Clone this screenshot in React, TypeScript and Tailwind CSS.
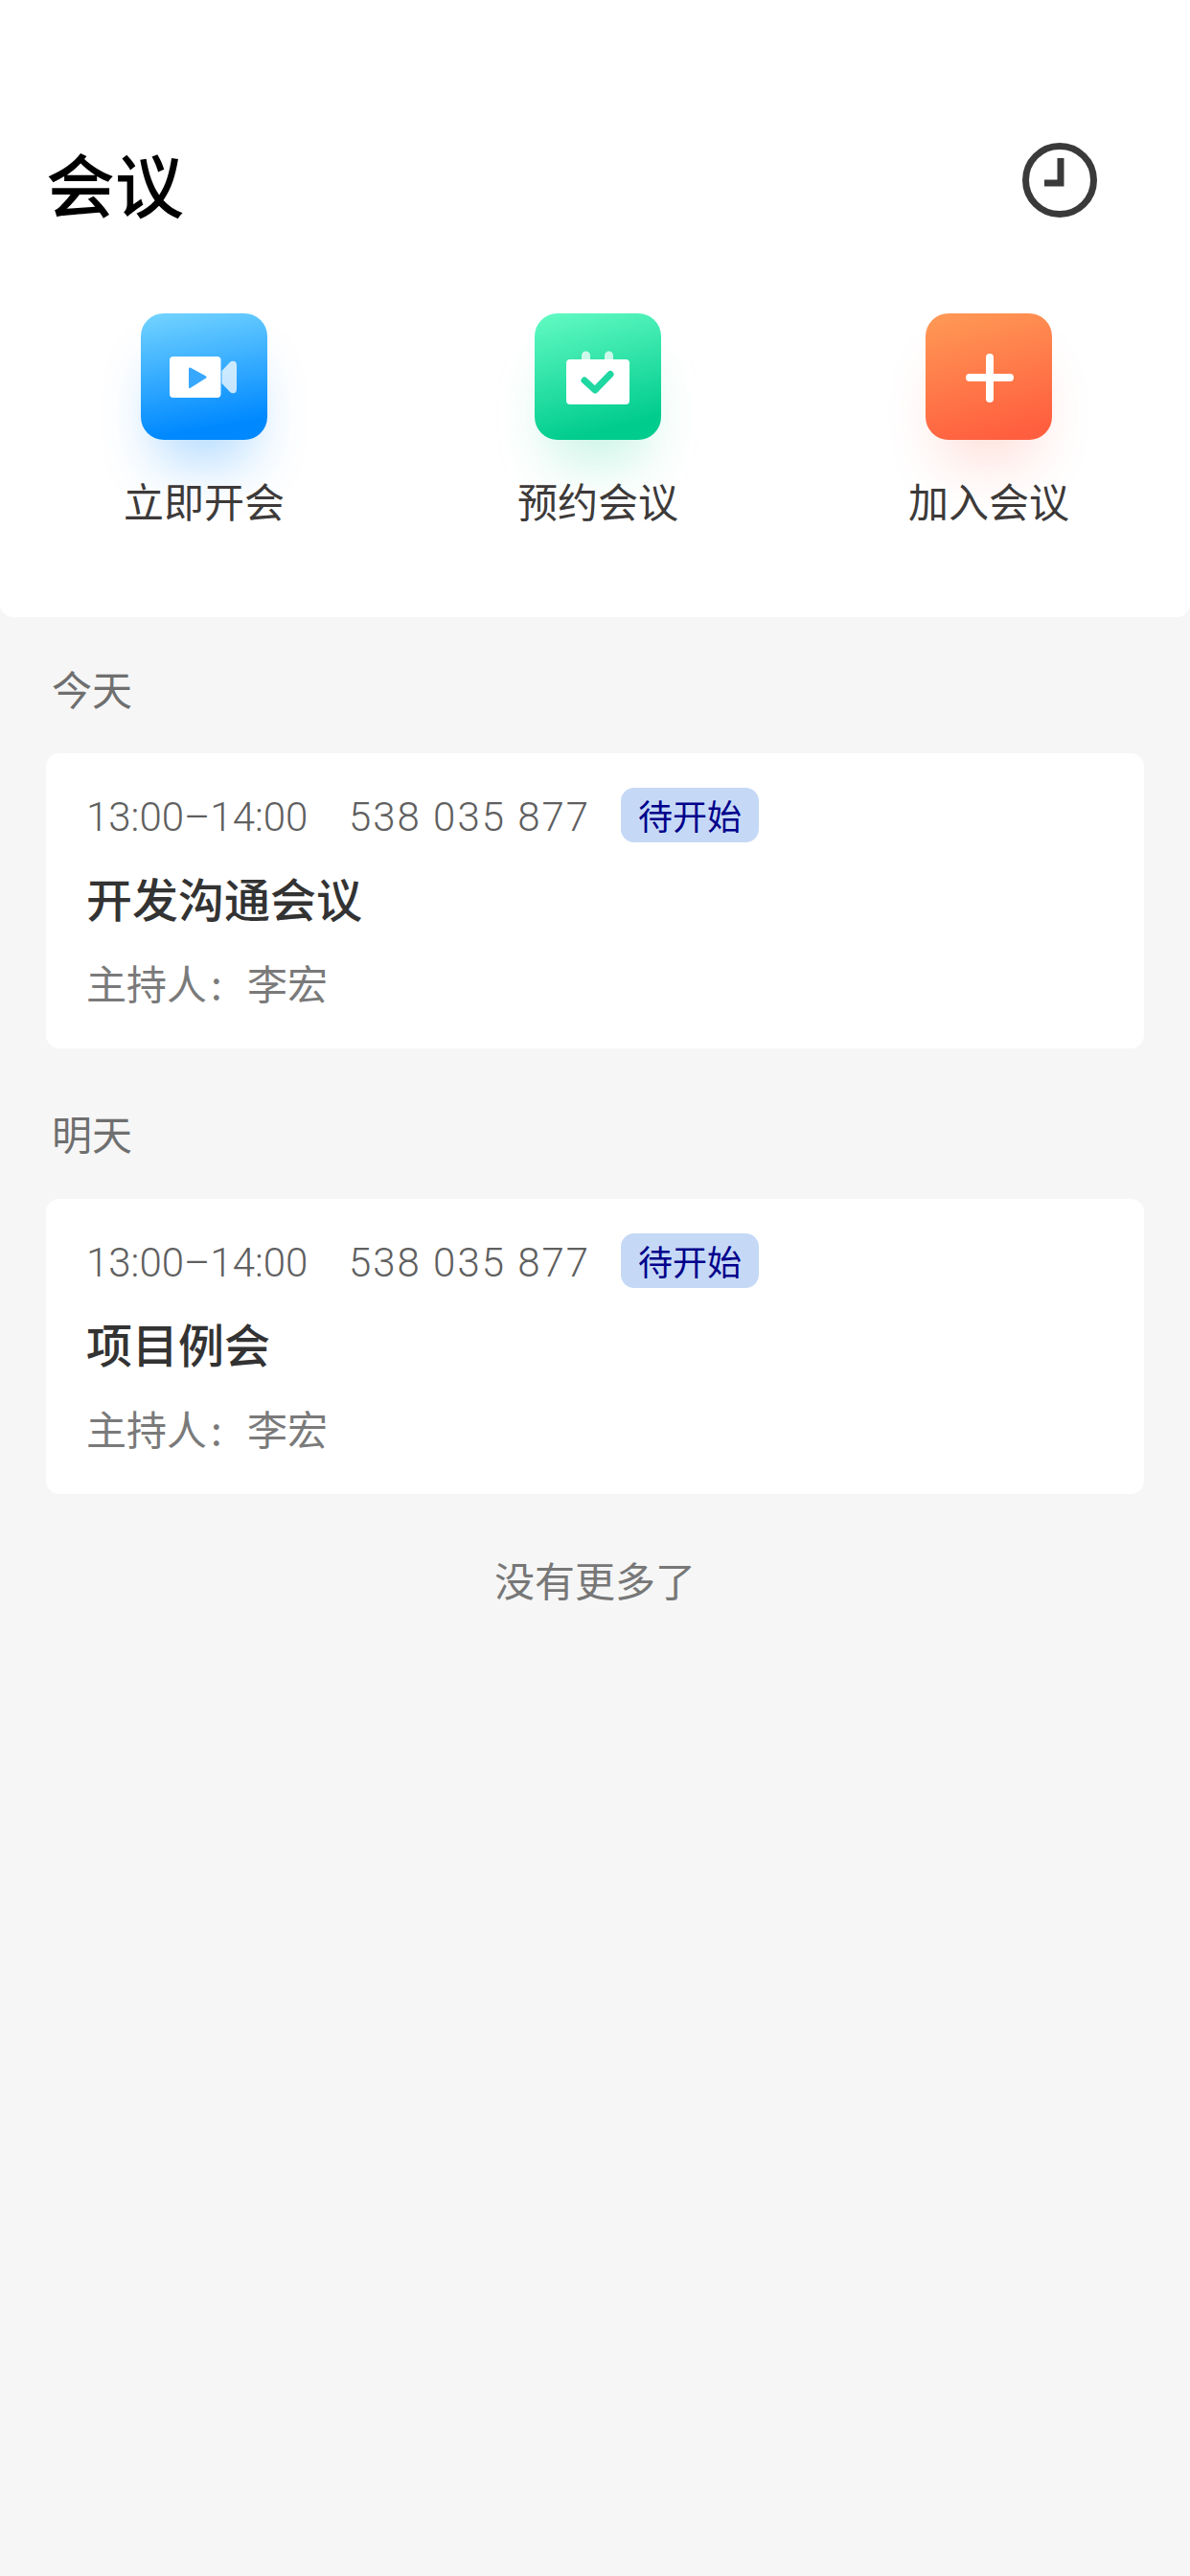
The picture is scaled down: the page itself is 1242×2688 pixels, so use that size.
const cjk = '"Noto Sans CJK SC", "Noto Sans", sans-serif';

function VideoIcon() {
  return (
    <svg width="132" height="132" viewBox="0 0 132 132" className="block">
      <rect x="30" y="45" width="53.5" height="43" rx="4" fill="#fff" />
      <path d="M51.5 56.5 L68 65.5 Q69.5 66.5 68 67.5 L51.5 78 Q50 78.6 50 77 L50 58 Q50 56 51.5 56.5 Z" fill="#38a8ff" />
      <path d="M84.5 60 L93 51 Q95 49 98 50 Q100 51 100 54 L100 79 Q100 82 98 83 Q95 84 93 82 L84.5 73 Z" fill="#fff" fillOpacity="0.75" />
    </svg>
  );
}

function CalendarIcon() {
  return (
    <svg width="132" height="132" viewBox="0 0 132 132" className="block">
      <path d="M49 49 L49 44 A4.5 4.5 0 0 1 58 44 L58 49 Z" fill="#fff" fillOpacity="0.75" />
      <path d="M73 49 L73 44 A4.5 4.5 0 0 1 82 44 L82 49 Z" fill="#fff" fillOpacity="0.75" />
      <rect x="33" y="48" width="66" height="47" rx="4" fill="#fff" />
      <path d="M52 70 L63 80 L79 63.5" fill="none" stroke="#1fd7a0" strokeWidth="7" strokeLinecap="round" strokeLinejoin="round" />
    </svg>
  );
}

function PlusIcon() {
  return (
    <svg width="132" height="132" viewBox="0 0 132 132" className="block">
      <path d="M46 67 L88 67 M67 46 L67 89" fill="none" stroke="#fff" strokeWidth="8" strokeLinecap="round" />
    </svg>
  );
}

function Clock() {
  return (
    <svg width="80" height="80" viewBox="0 0 80 80" className="block">
      <circle cx="40" cy="40" r="35.5" fill="none" stroke="#3a3a3a" strokeWidth="7" />
      <path d="M41 17 L41 43 L24 43" fill="none" stroke="#3a3a3a" strokeWidth="7" />
    </svg>
  );
}

function Action({ label, box, icon }: { label: string; box: string; icon: React.ReactNode }) {
  return (
    <div className="flex w-[168px] flex-col items-center">
      <div className={`h-[132px] w-[132px] rounded-[24px] ${box}`}>{icon}</div>
      <div className="mt-[33px] whitespace-nowrap text-[42px] leading-[60px] text-[#3d3a39]">{label}</div>
    </div>
  );
}

function Meeting({ title }: { title: string }) {
  return (
    <div className="mx-[48px] flex h-[308px] flex-col rounded-[14px] bg-white pl-[42px] pt-[36px]">
      <div className="flex h-[57px] items-center">
        <span className="w-[232px] whitespace-nowrap pt-[3px] text-[42px] font-light leading-[57px] text-[#5f5f5f]" style={{ fontFamily: 'Roboto, sans-serif' }}>13:00–14:00</span>
        <span className="ml-[42px] w-[250px] whitespace-nowrap pt-[3px] text-[42px] font-light leading-[57px] tracking-[2px] text-[#5f5f5f]" style={{ fontFamily: 'Roboto, sans-serif' }}>538 035 877</span>
        <span className="ml-[34px] flex h-[57px] w-[144px] items-center justify-center rounded-[14px] bg-[#c5d9f6] text-[36px] leading-[57px] text-[#00008b]">待开始</span>
      </div>
      <div className="mt-[24px] text-[48px] font-medium leading-[66px] text-[#333333]">{title}</div>
      <div className="mt-[26px] flex text-[42px] leading-[60px] text-[#7a7a7a]">
        <span>主持人</span>
        <span className="w-[42px] pl-[4px]">:</span>
        <span>李宏</span>
      </div>
    </div>
  );
}

export default function App() {
  return (
    <div className="h-[2688px] w-[1242px] overflow-hidden bg-[#f6f6f6]" style={{ fontFamily: cjk }}>
      <header className="h-[644px] rounded-b-[14px] bg-white pt-[148px]">
        <div className="flex h-[80px] items-center justify-between pl-[48px] pr-[96px]">
          <h1 className="pt-[3px] text-[72px] font-medium leading-[80px] text-black">会议</h1>
          <Clock />
        </div>
        <div className="mt-[99px] grid grid-cols-[411px_408px_168px] pl-[129px]">
          <Action label="立即开会" box="bg-[linear-gradient(170deg,#74d4ff,#0089ff_85%)] shadow-[0_40px_56px_-16px_rgba(0,137,255,0.3)]" icon={<VideoIcon />} />
          <Action label="预约会议" box="bg-[linear-gradient(165deg,#63fbc4,#00cc8d_85%)] shadow-[0_40px_56px_-16px_rgba(0,204,141,0.22)]" icon={<CalendarIcon />} />
          <Action label="加入会议" box="bg-[linear-gradient(165deg,#ff9a56,#ff5f3f_90%)] shadow-[0_40px_56px_-16px_rgba(255,95,63,0.2)]" icon={<PlusIcon />} />
        </div>
      </header>
      <div className="ml-[54px] mt-[44px] text-[42px] leading-[60px] text-[#6f6f6f]">今天</div>
      <div className="mt-[38px]"><Meeting title="开发沟通会议" /></div>
      <div className="ml-[54px] mt-[58px] text-[42px] leading-[60px] text-[#6f6f6f]">明天</div>
      <div className="mt-[39px]"><Meeting title="项目例会" /></div>
      <div className="mt-[59px] text-center text-[42px] leading-[60px] text-[#777777]">没有更多了</div>
    </div>
  );
}
